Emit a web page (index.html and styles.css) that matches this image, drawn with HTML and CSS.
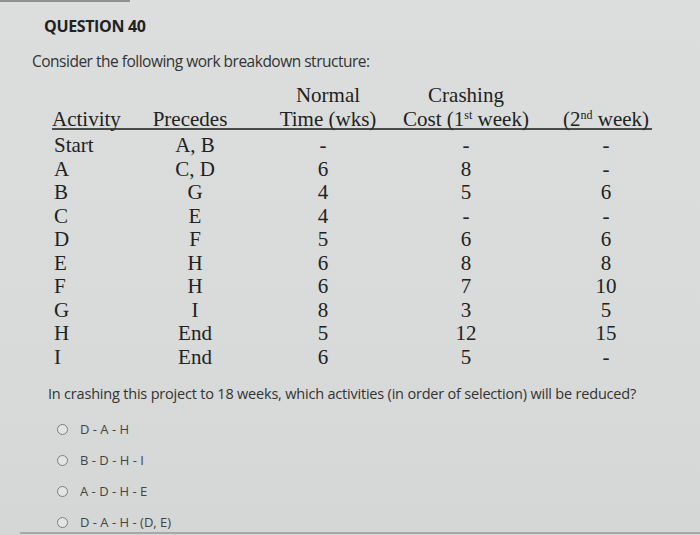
FILE: index.html
```html
<!DOCTYPE html>
<html>
<head>
<meta charset="utf-8">
<link rel="stylesheet" href="styles.css">
</head>
<body>
<div class="page">
  <div class="topline"></div>
  <div class="title">QUESTION 40</div>
  <div class="intro">Consider the following work breakdown structure:</div>

  <div class="wbs">
    <div class="thead">
      <div class="c1"><br>Activity</div>
      <div class="c2"><br>Precedes</div>
      <div class="c3">Normal<br>Time (wks)</div>
      <div class="c4">Crashing<br>Cost (1<sup>st</sup> week)</div>
      <div class="c5"><br>(2<sup>nd</sup> week)</div>
    </div>
    <div class="tbody">
      <div class="row"><div class="c1">Start</div><div class="c2">A, B</div><div class="c3">-</div><div class="c4">-</div><div class="c5">-</div></div>
      <div class="row"><div class="c1">A</div><div class="c2">C, D</div><div class="c3">6</div><div class="c4">8</div><div class="c5">-</div></div>
      <div class="row"><div class="c1">B</div><div class="c2">G</div><div class="c3">4</div><div class="c4">5</div><div class="c5">6</div></div>
      <div class="row"><div class="c1">C</div><div class="c2">E</div><div class="c3">4</div><div class="c4">-</div><div class="c5">-</div></div>
      <div class="row"><div class="c1">D</div><div class="c2">F</div><div class="c3">5</div><div class="c4">6</div><div class="c5">6</div></div>
      <div class="row"><div class="c1">E</div><div class="c2">H</div><div class="c3">6</div><div class="c4">8</div><div class="c5">8</div></div>
      <div class="row"><div class="c1">F</div><div class="c2">H</div><div class="c3">6</div><div class="c4">7</div><div class="c5">10</div></div>
      <div class="row"><div class="c1">G</div><div class="c2">I</div><div class="c3">8</div><div class="c4">3</div><div class="c5">5</div></div>
      <div class="row"><div class="c1">H</div><div class="c2">End</div><div class="c3">5</div><div class="c4">12</div><div class="c5">15</div></div>
      <div class="row"><div class="c1">I</div><div class="c2">End</div><div class="c3">6</div><div class="c4">5</div><div class="c5">-</div></div>
    </div>
  </div>

  <div class="question">In crashing this project to 18 weeks, which activities (in order of selection) will be reduced?</div>
  <div class="options">
    <div class="option"><span class="radio"></span><span class="label">D - A - H</span></div>
    <div class="option"><span class="radio"></span><span class="label">B - D - H - I</span></div>
    <div class="option"><span class="radio"></span><span class="label">A - D - H - E</span></div>
    <div class="option"><span class="radio"></span><span class="label">D - A - H - (D, E)</span></div>
  </div>
  <div class="footerline"></div>
</div>
</body>
</html>
```

FILE: styles.css
```css
html, body {
  margin: 0;
  padding: 0;
}
body {
  width: 700px;
  height: 535px;
  overflow: hidden;
  background: linear-gradient(180deg, #dcdedd 0%, #d8dbda 60%, #d4d7d6 100%);
  font-family: "Open Sans", "Liberation Sans", sans-serif;
  color: #2e2e2e;
}
.page {
  display: flex;
  flex-direction: column;
}
.topline {
  width: 130px;
  height: 2px;
  background: #8e9191;
}
.title {
  margin: 13.5px 0 0 44px;
  font-size: 16px;
  font-weight: 700;
  letter-spacing: -0.35px;
  line-height: 20px;
  color: #222;
}
.intro {
  margin: 15.5px 0 0 32px;
  font-size: 15.5px;
  letter-spacing: -0.5px;
  line-height: 20px;
  color: #333;
}
.wbs {
  margin: 12px 0 0 52px;
  width: 600px;
  font-family: "Liberation Serif", "Times New Roman", serif;
  font-size: 21px;
  color: #222;
}
.thead, .row {
  display: grid;
  grid-template-columns: 80px 122px 140px 144px 114px;
}
.thead {
  height: 45px;
  line-height: 24px;
  border-bottom: 2px solid #4a4a4a;
}
.thead > div {
  white-space: nowrap;
}
.thead .c2 {
  padding-right: 6px;
}
.thead .c3 {
  padding-left: 8px;
}
.tbody {
  margin-top: 4px;
}
.row {
  height: 23.5px;
  line-height: 23.5px;
}
.c2, .c3, .c4, .c5 {
  text-align: center;
}
.c5 {
  padding-left: 22px;
}
.row .c1 {
  padding-left: 2px;
}
.row .c2 {
  padding-left: 4px;
}
.row .c3 {
  padding-right: 2px;
}
sup {
  font-size: 12px;
  line-height: 0;
  vertical-align: 7px;
}
.question {
  margin: 15px 0 0 48px;
  font-size: 14.5px;
  letter-spacing: -0.2px;
  line-height: 20px;
  color: #333;
}
.options {
  margin: 15px 0 0 57px;
  display: flex;
  flex-direction: column;
  gap: 11px;
}
.option {
  height: 20px;
  display: flex;
  align-items: center;
  gap: 12px;
}
.radio {
  width: 9px;
  height: 9px;
  border: 1px solid #7c7e7e;
  border-radius: 50%;
  background: #e3e5e4;
}
.label {
  font-size: 13px;
  line-height: 20px;
  color: #444;
}
.footerline {
  margin: 0 0 0 20px;
  height: 2px;
  background: #a6a9a9;
}
```
